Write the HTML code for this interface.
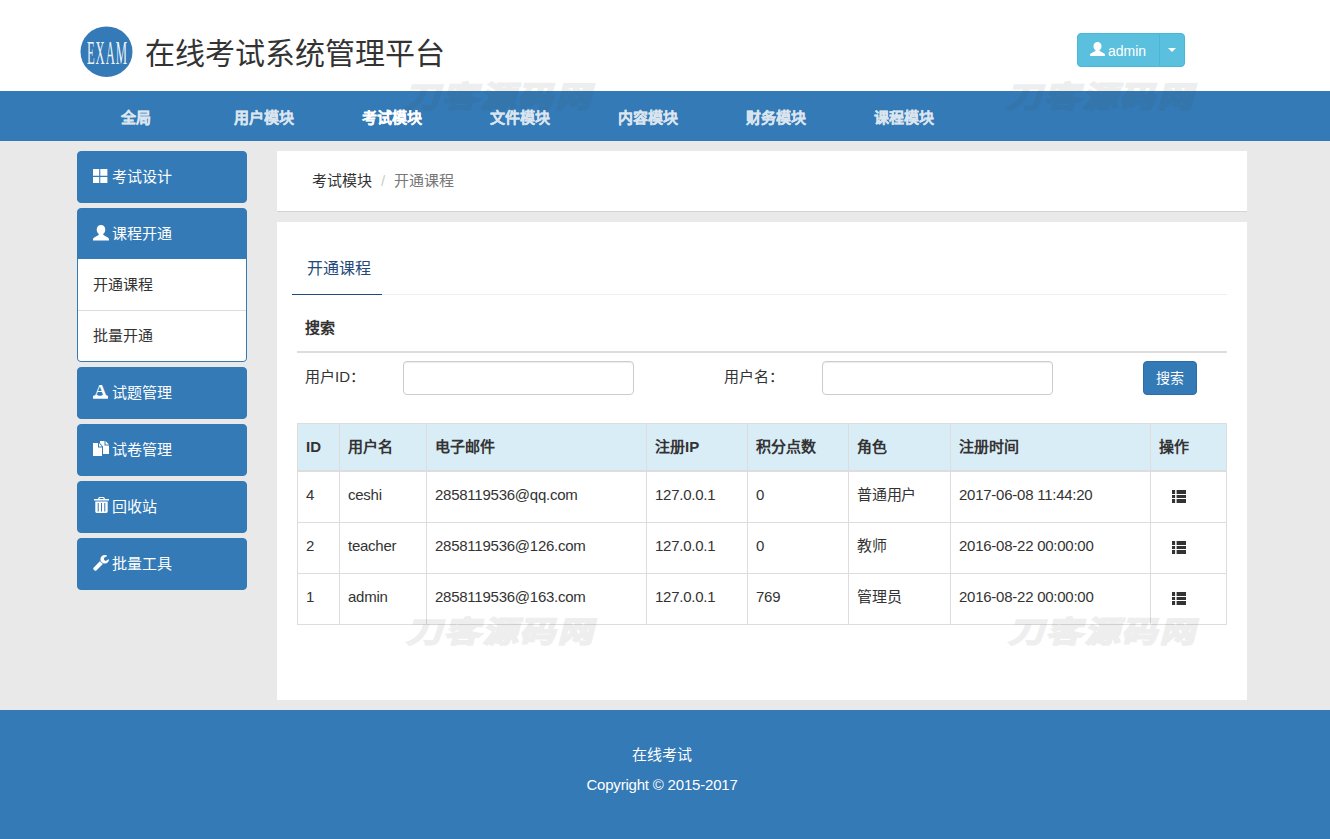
<!DOCTYPE html>
<html lang="zh-CN">
<head>
<meta charset="utf-8">
<title>在线考试系统管理平台</title>
<style>
*{box-sizing:border-box;}
html,body{margin:0;padding:0;}
body{width:1330px;height:839px;overflow:hidden;position:relative;background:#e9e9e9;
  font-family:"Liberation Sans",sans-serif;font-size:15px;line-height:20px;color:#333;}
a{color:inherit;text-decoration:none;}
ul{list-style:none;margin:0;padding:0;}
svg{display:block;}

/* ---------- header ---------- */
#header{position:absolute;left:0;top:0;width:1330px;height:91px;background:#fff;}
#logo{position:absolute;left:80px;top:26px;width:53px;height:52px;}
#title{position:absolute;left:145px;top:32px;height:44px;line-height:44px;font-size:30px;color:#333;white-space:nowrap;margin:0;font-weight:normal;}
#user{position:absolute;left:1077px;top:33px;height:34px;width:108px;}
#user .btn{position:absolute;top:0;height:34px;background:#5bc0de;border:1px solid #46b8da;color:#fff;font-size:14px;line-height:20px;}
#user .b1{left:0;width:83px;border-radius:4px 0 0 4px;}
#user .b2{left:82px;width:26px;border-radius:0 4px 4px 0;}
#user .b1 svg{position:absolute;left:12px;top:8px;}
#user .b1 span{position:absolute;left:30px;top:7px;}
#user .caret{position:absolute;left:8px;top:14px;width:0;height:0;border-top:4px solid #fff;border-left:4px solid transparent;border-right:4px solid transparent;}

/* ---------- navbar ---------- */
#nav{position:absolute;left:0;top:91px;width:1330px;height:50px;background:#337ab7;}
#nav ul{position:absolute;left:72px;top:0;}
#nav li{-webkit-text-stroke:.2px;float:left;width:128px;height:50px;line-height:54px;text-align:center;font-weight:bold;font-size:15px;color:#dbe5ef;}
#nav li.on{color:#fff;}

/* ---------- sidebar ---------- */
#side{position:absolute;left:77px;top:151px;width:170px;}
.sp{background:#337ab7;border:1px solid #337ab7;border-radius:4px;margin-bottom:5px;color:#fff;overflow:hidden;}
.sp .hd{position:relative;height:50px;padding:15px 15px 15px 34px;font-size:15px;line-height:20px;white-space:nowrap;}
.sp .hd svg{position:absolute;left:15px;top:17px;}
.sp .lg{background:#fff;color:#333;}
.sp .lg li{height:52px;padding:16px 15px 14px;border-bottom:1px solid #ddd;line-height:20px;}
.sp .lg li:last-child{border-bottom:0;height:50px;padding-top:15px;}

/* ---------- content ---------- */
#crumb{position:absolute;left:277px;top:151px;width:970px;height:61px;background:#fff;border-bottom:1px solid #d4d4d4;padding:20px 35px 18px;line-height:20px;font-size:15px;white-space:nowrap;}
#crumb .sep{color:#ccc;padding:0 9px 0 9px;}
#crumb .cur{color:#777;}
#main{position:absolute;left:277px;top:222px;width:970px;height:478px;background:#fff;}
#tabs{position:absolute;left:15px;top:25px;width:935px;height:48px;border-bottom:1px solid #eee;}
#tabs .tab{position:absolute;left:0;top:0;width:90px;height:48px;border-bottom:1px solid #1f4a7a;padding:11px 15px 9px;font-size:16px;line-height:22px;color:#1f4a7a;white-space:nowrap;}
#shead{position:absolute;left:20px;top:96px;width:930px;height:35px;border-bottom:2px solid #ddd;padding:0 8px;font-weight:bold;line-height:20px;}
.lbl{position:absolute;top:145px;line-height:20px;white-space:nowrap;}
.inp{position:absolute;top:139px;width:231px;height:34px;border:1px solid #ccc;border-radius:4px;background:#fff;box-shadow:inset 0 1px 1px rgba(0,0,0,.075);}
#sbtn{position:absolute;left:866px;top:139px;width:54px;height:34px;background:#337ab7;border:1px solid #2e6da4;border-radius:4px;color:#fff;font-size:14px;line-height:20px;padding:6px 12px;white-space:nowrap;}

table{position:absolute;left:20px;top:201px;width:930px;border-collapse:collapse;table-layout:fixed;border:1px solid #ddd;}
th,td{border:1px solid #ddd;text-align:left;vertical-align:middle;font-size:15px;line-height:20px;white-space:nowrap;overflow:hidden;}
th{background:#d9edf7;padding:13px 8px;border-bottom:2px solid #ddd;font-weight:bold;}
td{padding:13px 8px 17px;letter-spacing:-.25px;}
td.op{padding:14px 8px 15px 21px;}

/* ---------- footer ---------- */
#footer{position:absolute;left:0;top:710px;width:1330px;height:129px;background:#337ab7;color:#fff;text-align:center;}
#footer p{position:absolute;left:0;width:1324px;margin:0;line-height:30px;font-size:15px;}

/* ---------- watermark ---------- */
.wm{position:absolute;width:196px;height:36px;line-height:36px;font-size:29px;font-weight:bold;color:#444;-webkit-text-stroke:2px #444;opacity:.088;white-space:nowrap;letter-spacing:2.5px;z-index:50;transform:skewX(-14deg) scaleX(1.2);transform-origin:0 100%;}
</style>
</head>
<body>

<div id="header">
  <svg id="logo" viewBox="0 0 53 52"><ellipse cx="26.5" cy="25.7" rx="26" ry="25.3" fill="#337ab7"/><text x="0" y="0" transform="translate(27.4 37.6) scale(0.385 1)" text-anchor="middle" letter-spacing="2.200" font-family="Liberation Serif, serif" font-size="33" fill="#fff" fill-opacity=".93">EXAM</text></svg>
  <h1 id="title">在线考试系统管理平台</h1>
  <div id="user">
    <a class="btn b1"><svg width="15" height="14" viewBox="0 0 16 16" preserveAspectRatio="none"><path fill="#fff" d="M8 0C5.500 0 3.700 2.100 3.700 4.800 3.700 6.700 4.600 8.400 5.900 9.200 5.900 9.900 5.700 10.300 5.100 10.700L.9 13.200C.3 13.600 0 14.100 0 14.800V16H16V14.800C16 14.100 15.700 13.600 15.100 13.200L10.900 10.700C10.300 10.300 10.100 9.900 10.100 9.200 11.400 8.400 12.300 6.700 12.300 4.800 12.300 2.100 10.500 0 8 0Z"/></svg><span>admin</span></a>
    <a class="btn b2"><i class="caret"></i></a>
  </div>
</div>

<div id="nav">
  <ul>
    <li>全局</li><li>用户模块</li><li class="on">考试模块</li><li>文件模块</li><li>内容模块</li><li>财务模块</li><li>课程模块</li>
  </ul>
</div>

<div id="side">
  <div class="sp"><div class="hd"><svg width="15" height="14" viewBox="0 0 15 14"><path fill="#fff" d="M0 0h6.200v6.800H0zM7.300 0H14.400v6.800H7.300zM0 7.900h6.200V14H0zM7.300 7.900H14.400V14H7.300z"/></svg>考试设计</div></div>
  <div class="sp"><div class="hd"><svg width="16" height="15.500" viewBox="0 0 16 16" preserveAspectRatio="none" style="top:16px"><path fill="#fff" d="M8 0C5.500 0 3.700 2.100 3.700 4.800 3.700 6.700 4.600 8.400 5.900 9.200 5.900 9.900 5.700 10.300 5.100 10.700L.9 13.200C.3 13.600 0 14.100 0 14.800V16H16V14.800C16 14.100 15.700 13.600 15.100 13.200L10.900 10.700C10.300 10.300 10.100 9.900 10.100 9.200 11.400 8.400 12.300 6.700 12.300 4.800 12.300 2.100 10.500 0 8 0Z"/></svg>课程开通</div>
    <ul class="lg"><li>开通课程</li><li>批量开通</li></ul>
  </div>
  <div class="sp"><div class="hd"><svg width="15" height="15" viewBox="0 0 15 15" style="top:16px"><path fill="#fff" d="M0 11.700h15v3H0z"/><text x="7.500" y="11.800" text-anchor="middle" font-family="Liberation Serif, serif" font-weight="bold" font-size="17.500" fill="#fff">A</text></svg>试题管理</div></div>
  <div class="sp"><div class="hd"><svg width="16" height="15" viewBox="0 0 16 15" style="top:16px"><path fill="#fff" d="M0 2h5v4.500h4V15H0zM6 2l3 3.500H6zM7 0h4.500v4.500H16V13h-6V5.500L7 2zM12.500 0L16 3.500h-3.500z"/></svg>试卷管理</div></div>
  <div class="sp"><div class="hd"><svg width="15" height="16" viewBox="0 0 15 16" style="top:15px;left:16px"><path fill="#fff" fill-rule="evenodd" d="M5 0h5l1.100 2H15v1.600H0V2h3.900zM5.800 1l-.5 1h4.400l-.5-1zM1.300 4.500h12.400V14.600c0 .8-.6 1.400-1.400 1.400H2.700c-.8 0-1.400-.6-1.400-1.400zM3.700 6v8.500h1V6zM7 6v8.500h1V6zM10.300 6v8.500h1V6z"/></svg>回收站</div></div>
  <div class="sp"><div class="hd"><svg width="16" height="16" viewBox="0 -1408 1664 1664" style="top:16px"><path fill="#fff" transform="scale(1 -1)" d="M1028 484C897 536 792 641 740 772L59 91C35 67 21 34 21 0C21 -34 35 -67 59 -90L165 -198C189 -221 222 -235 256 -235C290 -235 323 -221 346 -198L1028 484ZM1662 919C1662 939 1650 954 1630 954C1610 954 1378 808 1345 789L1152 896V1120L1445 1289C1454 1295 1461 1306 1461 1317C1461 1329 1455 1338 1445 1345C1384 1386 1289 1408 1216 1408C969 1408 768 1207 768 960C768 713 969 512 1216 512C1405 512 1576 635 1639 813C1650 845 1662 886 1662 919Z"/></svg>批量工具</div></div>
</div>

<div id="crumb"><span>考试模块</span><span class="sep">/</span><span class="cur">开通课程</span></div>

<div id="main">
  <div id="tabs"><div class="tab">开通课程</div></div>
  <div id="shead">搜索</div>
  <div class="lbl" style="left:28px">用户ID：</div>
  <div class="inp" style="left:126px"></div>
  <div class="lbl" style="left:447px">用户名：</div>
  <div class="inp" style="left:545px"></div>
  <div id="sbtn">搜索</div>

  <table>
    <colgroup><col style="width:42px"><col style="width:87px"><col style="width:220px"><col style="width:101px"><col style="width:101px"><col style="width:102px"><col style="width:200px"><col style="width:76px"></colgroup>
    <thead><tr><th>ID</th><th>用户名</th><th>电子邮件</th><th>注册IP</th><th>积分点数</th><th>角色</th><th>注册时间</th><th>操作</th></tr></thead>
    <tbody>
      <tr><td>4</td><td>ceshi</td><td>2858119536@qq.com</td><td>127.0.0.1</td><td>0</td><td>普通用户</td><td>2017-06-08 11:44:20</td><td class="op"><svg width="14" height="13" viewBox="0 0 14 13"><path fill="#333" d="M0 0h3.100v3.900H0zM4.600 0H14v3.900H4.600zM0 5h3.100v3H0zM4.600 5H14v3H4.600zM0 9.100h3.100V13H0zM4.600 9.100H14V13H4.600z"/></svg></td></tr>
      <tr><td>2</td><td>teacher</td><td>2858119536@126.com</td><td>127.0.0.1</td><td>0</td><td>教师</td><td>2016-08-22 00:00:00</td><td class="op"><svg width="14" height="13" viewBox="0 0 14 13"><path fill="#333" d="M0 0h3.100v3.900H0zM4.600 0H14v3.900H4.600zM0 5h3.100v3H0zM4.600 5H14v3H4.600zM0 9.100h3.100V13H0zM4.600 9.100H14V13H4.600z"/></svg></td></tr>
      <tr><td>1</td><td>admin</td><td>2858119536@163.com</td><td>127.0.0.1</td><td>769</td><td>管理员</td><td>2016-08-22 00:00:00</td><td class="op"><svg width="14" height="13" viewBox="0 0 14 13"><path fill="#333" d="M0 0h3.100v3.900H0zM4.600 0H14v3.900H4.600zM0 5h3.100v3H0zM4.600 5H14v3H4.600zM0 9.100h3.100V13H0zM4.600 9.100H14V13H4.600z"/></svg></td></tr>
    </tbody>
  </table>
</div>

<div id="footer">
  <p style="top:30px">在线考试</p>
  <p style="top:60px;letter-spacing:-.2px">Copyright © 2015-2017</p>
</div>

<div class="wm" style="left:403px;top:79px">刀客源码网</div>
<div class="wm" style="left:1005px;top:79px">刀客源码网</div>
<div class="wm" style="left:405px;top:614px">刀客源码网</div>
<div class="wm" style="left:1007px;top:614px">刀客源码网</div>

</body>
</html>
